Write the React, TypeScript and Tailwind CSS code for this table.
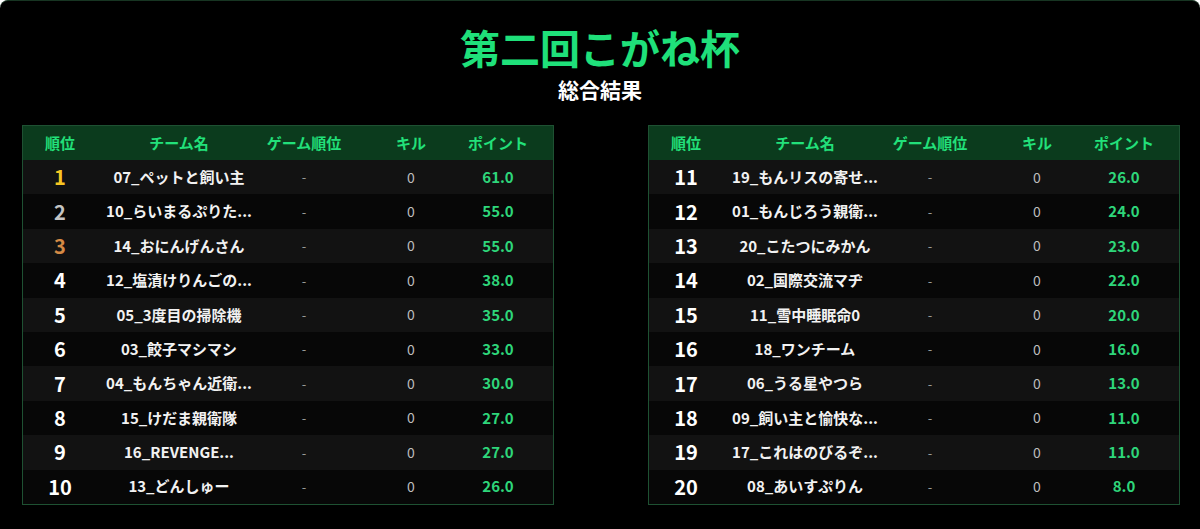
const left = [
  { rank: 1, name: '07_ペットと飼い主', pts: '61.0' },
  { rank: 2, name: '10_らいまるぷりた...', pts: '55.0' },
  { rank: 3, name: '14_おにんげんさん', pts: '55.0' },
  { rank: 4, name: '12_塩漬けりんごの...', pts: '38.0' },
  { rank: 5, name: '05_3度目の掃除機', pts: '35.0' },
  { rank: 6, name: '03_餃子マシマシ', pts: '33.0' },
  { rank: 7, name: '04_もんちゃん近衛...', pts: '30.0' },
  { rank: 8, name: '15_けだま親衛隊', pts: '27.0' },
  { rank: 9, name: '16_REVENGE...', pts: '27.0' },
  { rank: 10, name: '13_どんしゅー', pts: '26.0' },
]

const right = [
  { rank: 11, name: '19_もんリスの寄せ...', pts: '26.0' },
  { rank: 12, name: '01_もんじろう親衛...', pts: '24.0' },
  { rank: 13, name: '20_こたつにみかん', pts: '23.0' },
  { rank: 14, name: '02_国際交流マヂ', pts: '22.0' },
  { rank: 15, name: '11_雪中睡眠命0', pts: '20.0' },
  { rank: 16, name: '18_ワンチーム', pts: '16.0' },
  { rank: 17, name: '06_うる星やつら', pts: '13.0' },
  { rank: 18, name: '09_飼い主と愉快な...', pts: '11.0' },
  { rank: 19, name: '17_これはのびるぞ...', pts: '11.0' },
  { rank: 20, name: '08_あいすぷりん', pts: '8.0' },
]

type Row = { rank: number; name: string; pts: string }

function rankColor(rank: number) {
  if (rank === 1) return 'text-[#f7c623]'
  if (rank === 2) return 'text-[#c4c4c4]'
  if (rank === 3) return 'text-[#d58a45]'
  return 'text-white'
}

function Table({ rows }: { rows: Row[] }) {
  return (
    <div className="w-[532px] border border-[#1e5132]">
      <div className="grid h-[34px] grid-cols-[74px_164px_86px_112px_78px] items-center bg-[#0b3b1d] text-[15px] font-bold text-[#22e07a]">
        <div className="text-center">順位</div>
        <div className="text-center">チーム名</div>
        <div className="whitespace-nowrap text-center">ゲーム順位</div>
        <div className="pl-4 text-center">キル</div>
        <div className="whitespace-nowrap text-center">ポイント</div>
      </div>
      {rows.map((r, i) => (
        <div
          key={r.rank}
          className={
            'grid h-[34.4px] grid-cols-[74px_164px_86px_112px_78px] items-center ' +
            (i % 2 === 0 ? 'bg-[#121212]' : 'bg-[#070707]')
          }
        >
          <div className={'text-center text-[20px] font-bold ' + rankColor(r.rank)}>{r.rank}</div>
          <div className="whitespace-nowrap text-center text-[15px] font-bold text-[#f2f2f2]">{r.name}</div>
          <div className="text-center text-[13px] text-[#9a9a9a]">-</div>
          <div className="pl-4 text-center text-[14px] text-[#bdbdbd]">0</div>
          <div className="text-center text-[15px] font-bold text-[#2ed67a]">{r.pts}</div>
        </div>
      ))}
    </div>
  )
}

export default function App() {
  return (
    <div
      className="min-h-[529px] rounded-t-lg border-t border-[#173522] bg-black pt-[26px]"
      style={{ fontFamily: '"Noto Sans CJK JP", "Noto Sans", sans-serif' }}
    >
      <h1 className="text-center text-[40px] font-bold leading-[40px] text-[#1fe07a]">第二回こがね杯</h1>
      <p className="mt-[10px] text-center text-[21px] font-bold leading-[24px] text-white">総合結果</p>
      <div className="mt-[24px] flex justify-between pl-[22px] pr-[20px]">
        <Table rows={left} />
        <Table rows={right} />
      </div>
    </div>
  )
}
